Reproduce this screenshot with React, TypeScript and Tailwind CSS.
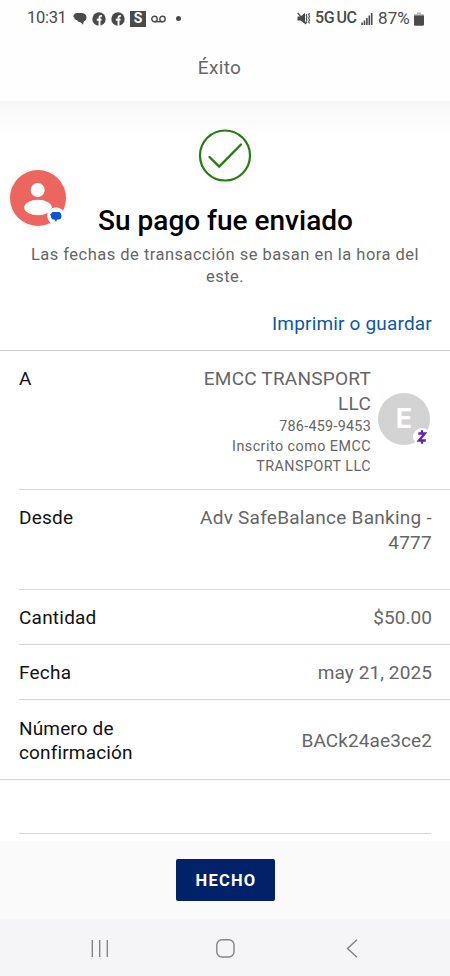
import type { ReactNode } from "react";

function StatusBar() {
  return (
    <div className="flex h-9 items-center pt-px text-[#4a4a4a]">
      <span className="ml-[27px] w-[39px] text-[16.5px] tracking-[-0.3px] whitespace-nowrap">10:31</span>
      <svg className="ml-[7px]" width="14" height="14" viewBox="0 0 14 14" fill="currentColor">
        <path d="M4.500 1h4.500q4.500.5 4.500 4.500 0 3-2.800 4.300L10 12.800 8 10.500Q5 10.300 4 8.300L1.500 7.300 1.600 5.800.3 5Q.3 1.300 4.500 1Z" />
      </svg>
      {[0, 1].map((n) => (
        <svg key={n} className="ml-[5px]" width="14" height="14" viewBox="0 0 14 14">
          <circle cx="7" cy="7" r="6.700" fill="currentColor" />
          <path d="M7.500 14V5.700q0-2 2.300-1.700M4.800 7.700h4.700" stroke="#fff" strokeWidth="1.900" fill="none" />
        </svg>
      ))}
      <span className="ml-[5px] flex h-4 w-4 items-center justify-center bg-[#4a4a4a] text-[14px] font-bold text-white">S</span>
      <svg className="ml-[5px]" width="15" height="8" viewBox="0 0 15 8" fill="none" stroke="currentColor" strokeWidth="1.400">
        <circle cx="3.500" cy="4" r="2.700" />
        <circle cx="11.500" cy="4" r="2.700" />
        <path d="M3.500 6.700h8" />
      </svg>
      <span className="ml-[10px] h-[5px] w-[5px] rounded-full bg-[#4a4a4a]" />
      <svg className="ml-auto" width="14" height="13" viewBox="0 0 14 13" fill="none" stroke="currentColor">
        <path d="M.5 4.500h3L8 .8v11L3.500 8.500h-3Z" fill="currentColor" stroke="none" />
        <path d="M.8.8 9 12" stroke="currentColor" strokeWidth="1.300" />
        <path d="m10 2-.8 1.500.8 1.500-.8 1.500.8 1.500-.8 1.500.8 1.500M12.500 1l-.8 1.800.8 1.700-.8 1.800.8 1.700-.8 1.800.8 1.700" strokeWidth="1.100" />
      </svg>
      <span className="ml-[4px] flex w-[41px] gap-[2px] text-[16px] font-medium tracking-[-0.3px] whitespace-nowrap">
        <span>5G</span>
        <span>UC</span>
      </span>
      <svg className="ml-[5px]" width="12" height="12" viewBox="0 0 12 12" fill="currentColor">
        <path d="M.3 9.500h1.600V12H.3zM2.700 7.500h1.600V12H2.700zM5.100 5h1.600v7H5.100zM7.500 2.500h1.600V12H7.500zM9.900 0h1.600v12H9.900z" />
      </svg>
      <span className="ml-[5px] w-[34px] text-[17px] tracking-[0.1px] whitespace-nowrap">87%</span>
      <svg className="mr-[26px] ml-[2px]" width="10" height="14" viewBox="0 0 10 14">
        <path d="M3 .5h4v1.500h2q1 0 1 2H0q0-2 1-2h2Z" fill="#bbb" />
        <path d="M0 3.500h10v9q0 1.300-1.300 1.300H1.300Q0 13.800 0 12.500Z" fill="currentColor" />
      </svg>
    </div>
  );
}

function Row({ label, className, children }: { label: ReactNode; className: string; children: ReactNode }) {
  return (
    <div className={`ml-[19px] flex justify-between border-b border-[#d6d6d6] pr-[18px] ${className}`}>
      <div className="tracking-[0.22px] text-[#111]">{label}</div>
      {children}
    </div>
  );
}

export default function App() {
  return (
    <div className="relative flex h-[976px] w-[450px] flex-col overflow-hidden bg-white font-[Roboto,sans-serif] text-[19px] leading-[24.5px] text-[#666]">
      <header className="h-[101px] shrink-0 bg-[#fefefe]">
        <StatusBar />
        <h1 className="pt-[20px] pr-[11px] text-center text-[19px] tracking-[0.35px]">Éxito</h1>
      </header>

      <main className="flex h-[740px] shrink-0 flex-col">
        <section className="flex h-[250px] shrink-0 flex-col items-center border-b border-[#d0d0d0] bg-linear-to-b from-[#f7f7f7] to-white to-[36px] pt-7">
          <svg width="54" height="54" viewBox="0 0 54 54" fill="none" stroke="#267b12">
            <circle cx="27" cy="26.500" r="25" strokeWidth="2.200" />
            <path d="m11.500 28 9.700 9.500L43 15.500" strokeWidth="2.400" strokeLinecap="round" />
          </svg>
          <h2 className="mt-[21px] pl-px text-[28px] leading-[34px] font-medium text-black">Su pago fue enviado</h2>
          <p className="mt-[6px] w-[400px] text-center text-[16.5px] leading-[22px] tracking-[0.48px]">
            Las fechas de transacción se basan en la hora del este.
          </p>
          <a className="mt-[24px] mr-[18px] self-end tracking-[0.18px] text-[#0b57a8]">Imprimir o guardar</a>
        </section>

        <Row label="A" className="h-[139px] shrink-0 pt-[16px]">
          <div className="-mr-[16px] flex">
            <div className="text-right">
              <div className="tracking-[0.22px]">EMCC TRANSPORT<br />LLC</div>
              <div className="text-[14.3px] leading-[21px] tracking-[0.3px]">786-459-9453</div>
              <div className="text-[14.3px] leading-[19.5px] tracking-[0.48px]">Inscrito como EMCC<br />TRANSPORT LLC</div>
            </div>
            <div className="relative mt-[26px] mr-[18px] ml-[7px] flex h-[52px] w-[52px] items-center justify-center rounded-full bg-[#d3d3d3] font-[Inter,sans-serif] text-[27px] font-bold text-white">
              E
              <span className="absolute top-[35px] left-[35px] flex h-[18px] w-[18px] items-center justify-center rounded-full bg-white">
                <svg width="10" height="14" viewBox="0 0 10 14" fill="none" stroke="#6420b4" strokeWidth="2.300">
                  <path d="M1.300 3.500h6.500L2 10.500h6.800M5 .3v3M5 10.500v3.200" />
                </svg>
              </span>
            </div>
          </div>
        </Row>
        <Row label="Desde" className="h-[100px] shrink-0 pt-[16px]">
          <div className="text-right tracking-[0.26px]">Adv SafeBalance Banking -<br />4777</div>
        </Row>
        <Row label="Cantidad" className="h-[55px] shrink-0 items-center pt-[2px]">
          <div className="tracking-[0.05px]">$50.00</div>
        </Row>
        <Row label="Fecha" className="h-[55px] shrink-0 items-center pt-[2px]">
          <div className="tracking-[0.1px]">may 21, 2025</div>
        </Row>
        <div className="flex h-[80px] shrink-0 items-center justify-between border-b border-[#d6d6d6] pt-[3px] pr-[18px] pl-[19px]">
          <div className="tracking-[0.15px] text-[#111]">Número de<br />confirmación</div>
          <div className="tracking-[0.1px]">BACk24ae3ce2</div>
        </div>
        <div className="mx-[19px] h-[54px] shrink-0 border-b border-[#d6d6d6]" />
      </main>

      <footer className="flex h-[78px] shrink-0 justify-center bg-[#fafafa] pt-[18px]">
        <button className="h-[42px] w-[99px] rounded-[2px] bg-[#012169] pt-[3px] pl-[2px] text-[16.5px] font-bold tracking-[1.2px] text-white">HECHO</button>
      </footer>
      <nav className="flex h-[57px] shrink-0 items-start bg-[#f5f5f8] pt-5 text-[#858585]">
        <svg className="ml-[90px]" width="20" height="20" viewBox="0 0 20 20" stroke="currentColor" strokeWidth="1.400">
          <path d="M2.300 1v17M9.700 1v17M17.300 1v17" />
        </svg>
        <svg className="ml-[105px]" width="20" height="20" viewBox="0 0 20 20" fill="none" stroke="currentColor" strokeWidth="1.400">
          <rect x="1.800" y=".8" width="17.200" height="17.200" rx="5.200" />
        </svg>
        <svg className="ml-[109px]" width="20" height="20" viewBox="0 0 20 20" fill="none" stroke="currentColor" strokeWidth="1.500">
          <path d="m13 .8-9.500 8.700 9.500 8.700" />
        </svg>
      </nav>

      <div className="absolute top-[170px] left-[10px] h-[56px] w-[56px] rounded-full bg-[#ed655f] shadow-[0_0_5px_rgba(0,0,0,0.08)]">
        <svg width="56" height="56" viewBox="0 0 56 56">
          <circle cx="27.700" cy="20" r="7" fill="#fff" />
          <ellipse cx="28" cy="37.500" rx="13.800" ry="7.700" fill="#fff" />
          <circle cx="46" cy="46" r="8.700" fill="#fff" />
          <path d="M42.500 42h7q2 1 2 4t-2.500 3.500h-2L46 52l-1.500-2.500h-2l-1.500-2v-1.500l-1-1.300.8-.8Z" fill="#0b57d0" />
        </svg>
      </div>
    </div>
  );
}
